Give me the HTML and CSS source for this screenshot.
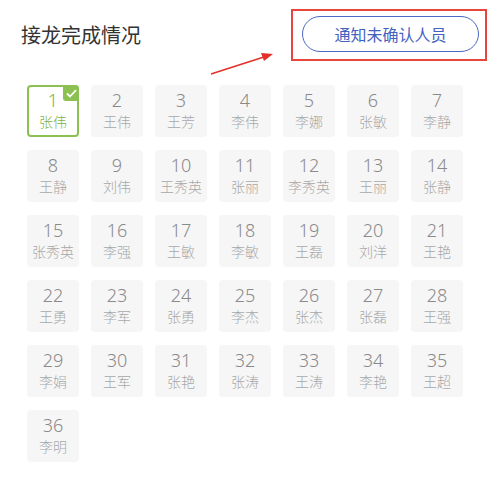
FILE: index.html
```html
<!DOCTYPE html>
<html lang="zh-CN">
<head>
    <meta charset="UTF-8">
    <meta name="viewport" content="width=device-width, initial-scale=1.0">
    <title>接龙完成情况</title>
    <link rel="stylesheet" href="styles.css">
</head>
<body>
    <header class="top">
        <h1>接龙完成情况</h1>
        <button class="notify">通知未确认人员</button>
    </header>

    <!-- marker drawn over the notify button -->
    <div class="mark-box"></div>
    <svg class="mark-arrow" width="80" height="40" viewBox="0 0 80 40">
        <line x1="2" y1="36" x2="58" y2="18" stroke="#e3302b" stroke-width="1.6"/>
        <polygon points="64,16 52,15 55,23" fill="#e3302b"/>
    </svg>

    <main class="grid" id="grid"></main>

    <script>
        const people = ['张伟', '王伟', '王芳', '李伟', '李娜', '张敏', '李静',
            '王静', '刘伟', '王秀英', '张丽', '李秀英', '王丽', '张静',
            '张秀英', '李强', '王敏', '李敏', '王磊', '刘洋', '王艳',
            '王勇', '李军', '张勇', '李杰', '张杰', '张磊', '王强',
            '李娟', '王军', '张艳', '张涛', '王涛', '李艳', '王超',
            '李明'];
        const done = [1];
        const grid = document.getElementById('grid');

        people.forEach((name, i) => {
            const tile = document.createElement('div');
            tile.className = 'tile';
            if (done.includes(i + 1)) {
                tile.classList.add('done');
                tile.innerHTML = '<span class="check"><svg width="11" height="9" viewBox="0 0 11 9"><path d="M1 4.5 L4 7.5 L10 1.2" fill="none" stroke="#fff" stroke-width="1.8"/></svg></span>';
            }
            const num = document.createElement('span');
            num.className = 'num';
            num.textContent = i + 1;
            const who = document.createElement('span');
            who.className = 'name';
            who.textContent = name;
            tile.appendChild(num);
            tile.appendChild(who);
            grid.appendChild(tile);
        });
    </script>
</body>
</html>
```

FILE: styles.css
```css
body {
    margin: 0;
    background: #fff;
    font-family: "Noto Sans", "Noto Sans CJK SC", sans-serif;
    position: relative;
}
.top {
    display: flex;
    justify-content: space-between;
    align-items: center;
    padding: 16px 20px 0 21px;
}
h1 {
    margin: 0;
    font-size: 20px;
    font-weight: 400;
    color: #333;
    font-family: "Noto Sans CJK SC", sans-serif;
}
.notify {
    width: 177px;
    height: 36px;
    border: 1.5px solid #4a68c4;
    border-radius: 18px;
    background: #fff;
    color: #4362bf;
    font-size: 16px;
    font-family: "Noto Sans CJK SC", sans-serif;
    padding: 0;
}
.mark-box {
    position: absolute;
    left: 291px;
    top: 9px;
    width: 192px;
    height: 48px;
    border: 2px solid #e8453f;
}
.mark-arrow {
    position: absolute;
    left: 209px;
    top: 38px;
}
.grid {
    display: grid;
    grid-template-columns: repeat(7, 52px);
    grid-auto-rows: 52px;
    column-gap: 12px;
    row-gap: 13px;
    margin: 33px 0 0 27px;
}
.tile {
    position: relative;
    display: flex;
    flex-direction: column;
    align-items: center;
    justify-content: center;
    background: #f6f6f6;
    border-radius: 4px;
    box-sizing: border-box;
}
.num {
    font-size: 18px;
    font-weight: 300;
    line-height: 21px;
    color: #8a8a8a;
}
.name {
    font-size: 14px;
    line-height: 21px;
    color: #a8a8a8;
    font-family: "Noto Sans CJK SC", sans-serif;
    font-weight: 300;
}
.tile.done {
    background: #fff;
    border: 2px solid #8cc152;
}
.tile.done .num,
.tile.done .name {
    color: #7cb342;
}
.check {
    position: absolute;
    top: -2px;
    right: -2px;
    width: 16px;
    height: 16px;
    background: #8cc152;
    border-radius: 0 4px 0 3px;
    display: flex;
    align-items: center;
    justify-content: center;
}
```
